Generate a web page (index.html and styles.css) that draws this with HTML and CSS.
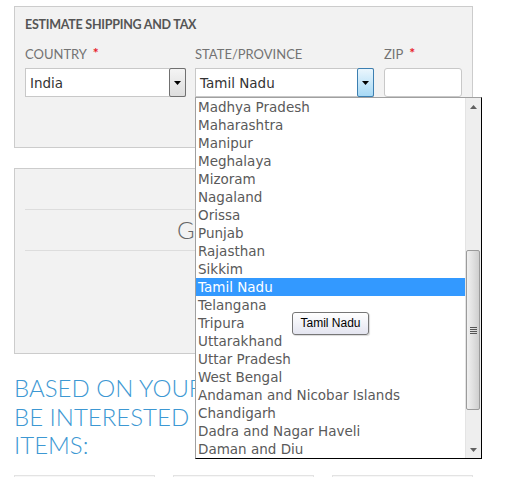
FILE: index.html
```html
<!DOCTYPE html>
<html lang="en">
<head>
<meta charset="utf-8">
<title>Estimate Shipping and Tax</title>
<link rel="stylesheet" href="styles.css">
</head>
<body>
<div class="page">
  <section class="panel estimate">
    <h2 class="panel-title">ESTIMATE SHIPPING AND TAX</h2>
    <div class="fields">
      <div class="field field-country">
        <label class="label">COUNTRY <span class="req">*</span></label>
        <div class="select">
          <span class="select-value">India</span>
          <span class="select-btn"><svg width="7" height="4" viewBox="0 0 7 4"><path d="M0 0H7L3.5 4Z" fill="#000"/></svg></span>
        </div>
      </div>
      <div class="field field-state">
        <label class="label">STATE/PROVINCE</label>
        <div class="select is-open">
          <span class="select-value">Tamil Nadu</span>
          <span class="select-btn"><svg width="7" height="4" viewBox="0 0 7 4"><path d="M0 0H7L3.5 4Z" fill="#000"/></svg></span>
        </div>
        <div class="listbox">
          <ul class="options">
            <li>Madhya Pradesh</li>
            <li>Maharashtra</li>
            <li>Manipur</li>
            <li>Meghalaya</li>
            <li>Mizoram</li>
            <li>Nagaland</li>
            <li>Orissa</li>
            <li>Punjab</li>
            <li>Rajasthan</li>
            <li>Sikkim</li>
            <li class="selected">Tamil Nadu</li>
            <li>Telangana</li>
            <li>Tripura</li>
            <li>Uttarakhand</li>
            <li>Uttar Pradesh</li>
            <li>West Bengal</li>
            <li>Andaman and Nicobar Islands</li>
            <li>Chandigarh</li>
            <li>Dadra and Nagar Haveli</li>
            <li>Daman and Diu</li>
          </ul>
          <div class="scrollbar">
            <span class="sb-arrow"><svg width="7" height="4" viewBox="0 0 7 4"><path d="M0 4H7L3.5 0Z" fill="#606060"/></svg></span>
            <div class="sb-track">
              <div class="sb-thumb"><span class="sb-grip"></span></div>
            </div>
            <span class="sb-arrow"><svg width="7" height="4" viewBox="0 0 7 4"><path d="M0 0H7L3.5 4Z" fill="#606060"/></svg></span>
          </div>
          <div class="tooltip">Tamil Nadu</div>
        </div>
      </div>
      <div class="field field-zip">
        <label class="label">ZIP <span class="req">*</span></label>
        <div class="input"></div>
      </div>
    </div>
  </section>

  <section class="panel totals">
    <div class="totals-row"></div>
    <div class="totals-row grand">GRAND TOTAL</div>
  </section>

  <h2 class="related-title">BASED ON YOUR CART, YOU MAY<br>BE INTERESTED IN THESE<br>ITEMS:</h2>

  <div class="cards">
    <div class="card"></div>
    <div class="card"></div>
    <div class="card"></div>
  </div>
</div>
</body>
</html>
```

FILE: styles.css
```css
* { box-sizing: border-box; }

html, body {
  margin: 0;
  background: #fff;
  overflow: hidden;
}

body {
  font-family: "Lato", "Open Sans", sans-serif;
  color: #555;
}

.page {
  width: 519px;
  padding: 6px 46px 0 14px;
}

.panel {
  background: #f2f2f2;
  border: 1px solid #ccc;
}

.estimate {
  height: 142px;
  padding: 10px 10px 0 10px;
}

.panel-title {
  margin: 0;
  font-size: 12.5px;
  line-height: 16px;
  font-weight: 700;
  color: #555;
  letter-spacing: -0.25px;
}

.fields {
  display: flex;
  margin-top: 13px;
}

.field { position: relative; }
.field-country { width: 161px; margin-right: 9px; }
.field-state { width: 179px; margin-right: 10px; }
.field-zip { width: 78px; }

.label {
  display: block;
  font-size: 13px;
  line-height: 16px;
  color: #737373;
  height: 16px;
  margin-bottom: 6px;
  white-space: nowrap;
}

.req {
  color: #e8202a;
  font-size: 14px;
  font-weight: 700;
  vertical-align: top;
  line-height: 14px;
  margin-left: 3px;
}

.select {
  display: flex;
  height: 29px;
  background: #fff;
  border: 1px solid #c8c8c8;
}

.select-value {
  flex: 1;
  font-family: "DejaVu Sans", Verdana, sans-serif;
  font-size: 13.5px;
  line-height: 28px;
  color: #333;
  padding-left: 4px;
}

.select-btn {
  width: 17px;
  margin: -1px -1px -1px 0;
  display: flex;
  align-items: center;
  justify-content: center;
  border: 1px solid #707070;
  border-radius: 2px;
  background: linear-gradient(#f4f4f4, #dddddd);
}

.select.is-open .select-btn {
  border-color: #3c7fb1;
  background: linear-gradient(#eaf6fd, #a7d9f5);
}

.input {
  height: 29px;
  background: #fff;
  border: 1px solid #c8c8c8;
  border-radius: 3px;
}

/* open dropdown list */
.listbox {
  position: absolute;
  left: 0;
  top: 51px;
  width: 287px;
  height: 362px;
  display: flex;
  background: #fff;
  border: 1px solid #a0a0a0;
  border-right-color: #000;
  border-bottom-color: #000;
  z-index: 5;
}

.options {
  list-style: none;
  margin: 0;
  padding: 0;
  flex: 1;
  font-family: "DejaVu Sans", Verdana, sans-serif;
  font-size: 13.5px;
  color: #5a5a5a;
}

.options li {
  height: 18px;
  line-height: 19px;
  padding-left: 2px;
  white-space: nowrap;
}

.options li.selected {
  background: #3399ff;
  color: #fff;
}

.scrollbar {
  width: 16px;
  display: flex;
  flex-direction: column;
  background: #eeeeee;
  border-left: 1px solid #e4e4e4;
}

.sb-arrow {
  height: 17px;
  display: flex;
  align-items: center;
  justify-content: center;
}

.sb-track {
  flex: 1;
  display: flex;
  flex-direction: column;
  justify-content: flex-end;
  padding-bottom: 31px;
}

.sb-thumb {
  height: 160px;
  margin: 0 1px 0 0;
  border: 1px solid #9b9b9b;
  border-radius: 2px;
  background: linear-gradient(90deg, #f0f0f0, #e2e2e2 45%, #cfcfcf);
  display: flex;
  align-items: center;
  justify-content: center;
}

.sb-grip {
  width: 7px;
  height: 7px;
  background: repeating-linear-gradient(#555 0 1px, transparent 1px 2px);
}

.tooltip {
  position: absolute;
  left: 96px;
  top: 214px;
  width: 77px;
  height: 23px;
  border: 1px solid #767676;
  border-radius: 3px;
  background: linear-gradient(#ffffff, #e4e5f0);
  font-family: "Liberation Sans", Arial, sans-serif;
  font-size: 12px;
  line-height: 21px;
  color: #000;
  text-align: center;
  box-shadow: 1px 1px 1px rgba(0,0,0,0.15);
}

/* totals panel */
.totals {
  margin-top: 20px;
  height: 186px;
  padding: 0 0 0 10px;
}

.totals-row {
  height: 41px;
  border-bottom: 1px solid #dddddd;
}

.grand {
  font-size: 24px;
  font-weight: 300;
  line-height: 40px;
  color: #666;
  padding-left: 152px;
  white-space: nowrap;
  overflow: hidden;
}

.related-title {
  margin: 20px 0 0 0;
  font-size: 24px;
  line-height: 28.5px;
  font-weight: 300;
  color: #3d98d3;
  white-space: nowrap;
}

.cards {
  display: flex;
  gap: 18px;
  margin-top: 15px;
}

.card {
  width: 141px;
  height: 80px;
  background: #f7f7f7;
  border: 1px solid #e3e3e3;
}
```
